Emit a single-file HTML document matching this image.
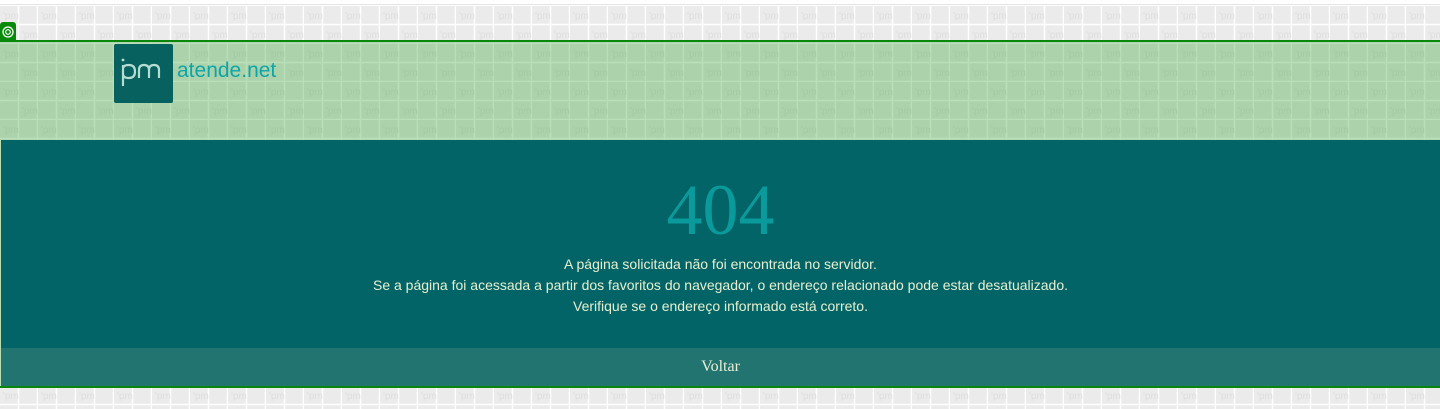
<!DOCTYPE html>
<html><head><meta charset="utf-8"><style>
html,body{margin:0;padding:0;width:1440px;height:409px;overflow:hidden;background:#fff;font-family:"Liberation Sans",sans-serif}
#bg{position:absolute;left:0;top:6px;width:1440px;height:403px}
#topline{position:absolute;left:0;top:4px;width:1440px;height:1px;background:#e4e4e4}
#icon{position:absolute;left:0;top:22px;width:16px;height:19px;background:#0a8a0a;border-radius:3px 3px 0 0}
#wrap{position:absolute;left:0;top:40px;width:1440px;height:348px;border-top:2px solid #0a870a;border-bottom:2px solid #0a870a;box-sizing:border-box}
#head{position:absolute;left:0;top:0;width:1440px;height:98px;background:rgba(70,170,70,0.38)}
#main{position:absolute;left:1px;top:98px;width:1439px;height:208px;background:#036467;text-align:center}
#foot{position:absolute;left:1px;top:306px;width:1439px;height:38px;background:#217470;text-align:center;color:#e8efd6;font-family:"Liberation Serif",serif;font-size:16px;line-height:38px}
#lb{position:absolute;left:0;top:98px;width:1px;height:246px;background:#b8ddb0}
h1{margin:0;position:absolute;left:0;right:0;top:32px;font-family:"Liberation Serif",serif;font-weight:normal;font-size:72px;color:#0a9a9c;line-height:76px}
.t{position:absolute;left:0;right:0;top:114px;color:#e6efd0;font-size:14px;line-height:21px}
#logo{position:absolute;left:114px;top:2px;width:59px;height:59px;background:#07615f;border-radius:2px}
</style></head><body>
<svg id="bg" xmlns="http://www.w3.org/2000/svg"><defs><pattern id="p" width="38" height="38" patternUnits="userSpaceOnUse"><rect width="38" height="38" fill="#ebebeb"/><path d="M0 18.5H38M0 37.5H38M18.5 0V38M37.5 0V38" stroke="#fff" stroke-width="1.5"/><text x="3" y="13" font-family="Liberation Sans" font-size="10" fill="#dedede">'pm</text><text x="22" y="32" font-family="Liberation Sans" font-size="10" fill="#dedede">'pm</text></pattern></defs><rect width="1440" height="403" fill="url(#p)"/></svg>
<div id="topline"></div>
<div id="icon"><svg width="16" height="19"><circle cx="8" cy="10" r="5" fill="none" stroke="#fff" stroke-width="1.3"/><circle cx="8" cy="10" r="2.3" fill="none" stroke="#fff" stroke-width="1.2"/></svg></div>
<div id="wrap">
<div id="head">
<div id="logo"><svg width="59" height="59"><circle cx="9" cy="16" r="1.4" fill="#b5dcd0"/><path d="M9 21V42M9 25Q9 21 15 21Q21 21 21 27.5Q21 34 15 34Q9 34 9 30M25 34V26Q25 21 30 21Q35 21 35 26V34M35 26Q35 21 40 21Q45 21 45 26V34" fill="none" stroke="#b5dcd0" stroke-width="2.2"/></svg></div>
<div style="position:absolute;left:177px;top:17px;font-size:21px;color:#0da6a8;letter-spacing:0px">atende<span>.net</span></div>
</div>
<div id="lb"></div>
<div id="main"><h1>404</h1><div class="t">A página solicitada não foi encontrada no servidor.<br>Se a página foi acessada a partir dos favoritos do navegador, o endereço relacionado pode estar desatualizado.<br>Verifique se o endereço informado está correto.</div></div>
<div id="foot">Voltar</div>
</div>
</body></html>
